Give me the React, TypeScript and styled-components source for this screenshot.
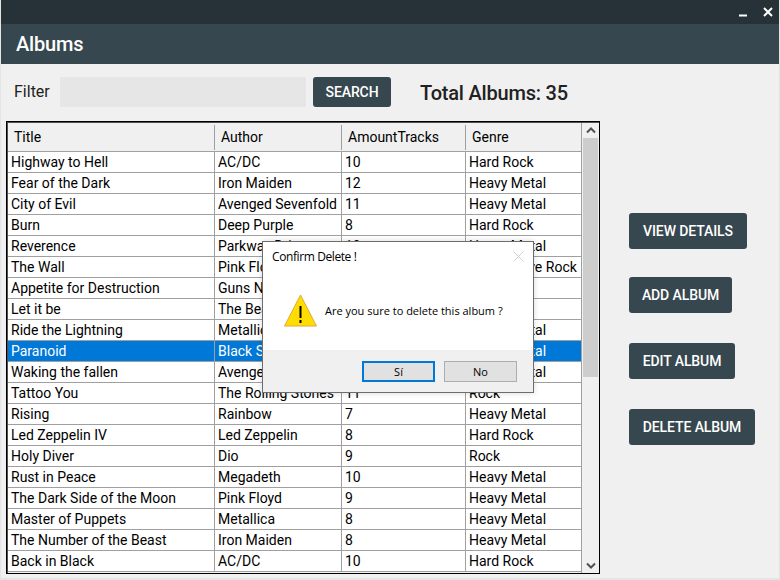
import React from "react";
import styled, { createGlobalStyle } from "styled-components";

const GlobalStyle = createGlobalStyle`
  html, body {
    margin: 0;
    padding: 0;
    background: #f0f0f0;
  }
  * {
    box-sizing: border-box;
  }
`;

const albums = [
  ["Highway to Hell", "AC/DC", "10", "Hard Rock"],
  ["Fear of the Dark", "Iron Maiden", "12", "Heavy Metal"],
  ["City of Evil", "Avenged Sevenfold", "11", "Heavy Metal"],
  ["Burn", "Deep Purple", "8", "Hard Rock"],
  ["Reverence", "Parkway Drive", "10", "Heavy Metal"],
  ["The Wall", "Pink Floyd", "26", "Progressive Rock"],
  ["Appetite for Destruction", "Guns N' Roses", "12", "Hard Rock"],
  ["Let it be", "The Beatles", "12", "Rock"],
  ["Ride the Lightning", "Metallica", "8", "Heavy Metal"],
  ["Paranoid", "Black Sabbath", "8", "Heavy Metal"],
  ["Waking the fallen", "Avenged Sevenfold", "13", "Heavy Metal"],
  ["Tattoo You", "The Rolling Stones", "11", "Rock"],
  ["Rising", "Rainbow", "7", "Heavy Metal"],
  ["Led Zeppelin IV", "Led Zeppelin", "8", "Hard Rock"],
  ["Holy Diver", "Dio", "9", "Rock"],
  ["Rust in Peace", "Megadeth", "10", "Heavy Metal"],
  ["The Dark Side of the Moon", "Pink Floyd", "9", "Heavy Metal"],
  ["Master of Puppets", "Metallica", "8", "Heavy Metal"],
  ["The Number of the Beast", "Iron Maiden", "8", "Heavy Metal"],
  ["Back in Black", "AC/DC", "10", "Hard Rock"],
];

const Window = styled.div`
  position: relative;
  width: 780px;
  height: 580px;
  overflow: hidden;
  font-family: Roboto, "Liberation Sans", sans-serif;
  background: #f0f0f0;
  border-left: 1px solid #e4e4e4;
  border-right: 1px solid #e4e4e4;
  border-bottom: 2px solid #e4e4e4;
`;

const TitleBar = styled.div`
  height: 24px;
  margin: 0 -1px;
  background: #263238;
  display: flex;
  justify-content: flex-end;
  align-items: center;
  gap: 15px;
  padding: 0 7px 0 0;
  color: #fff;
`;

const Header = styled.div`
  height: 40px;
  margin: 0 -1px;
  background: #37474f;
  color: #fff;
  font-size: 20px;
  font-weight: 500;
  letter-spacing: -0.2px;
  line-height: 40px;
  padding-left: 16px;
`;

const FilterRow = styled.div`
  display: flex;
  align-items: center;
  height: 57px;
  padding: 0 0 2px 13px;
`;

const FilterLabel = styled.label`
  font-size: 16px;
  color: #212121;
  width: 46px;
`;

const FilterInput = styled.div`
  width: 246px;
  height: 30px;
  background: #e6e6e6;
`;

const Button = styled.button<{ $top?: number; $width: number }>`
  width: ${({ $width }) => $width}px;
  height: 36px;
  padding: 0;
  margin-top: ${({ $top }) => $top ?? 30}px;
  border: 0;
  border-radius: 3px;
  background: #37474f;
  color: #fff;
  font-family: inherit;
  font-size: 14px;
  font-weight: 500;
  letter-spacing: -0.1px;
  white-space: nowrap;
`;

const SearchButton = styled(Button)`
  height: 30px;
  margin-top: 0;
  margin-left: 7px;
`;

const Total = styled.div`
  margin: 2px 0 0 29px;
  font-size: 20px;
  font-weight: 500;
  letter-spacing: -0.2px;
  color: #212121;
`;

const Body = styled.div`
  display: flex;
  align-items: flex-start;
`;

const TableFrame = styled.div`
  width: 594px;
  height: 453px;
  margin-left: 5px;
  padding: 1px 0 0 1px;
  border: 1px solid #000;
  display: flex;
  overflow: hidden;
  background: #505050;
`;

const Table = styled.div`
  width: 574px;
  overflow: hidden;
  font-size: 14px;
  color: #000;
  background: #f0f0f0;
  border-right: 1px solid #a0a0a0;
`;

const Columns = `
  display: grid;
  grid-template-columns: 207px 127px 124px 1fr;
`;

const HeaderRow = styled.div`
  ${Columns}
  height: 29px;
  padding-top: 2px;
  border-bottom: 1px solid #a0a0a0;
  background: #f0f0f0;
`;

const HeaderCell = styled.div`
  height: 25px;
  line-height: 25px;
  padding-left: 6px;
  border-right: 1px solid #a0a0a0;
  &:last-child {
    border-right: 0;
  }
`;

const Row = styled.div<{ $selected?: boolean }>`
  ${Columns}
  height: 21px;
  background: ${({ $selected }) => ($selected ? "#0078d7" : "#fff")};
  color: ${({ $selected }) => ($selected ? "#fff" : "#000")};
  border-bottom: 1px solid #a0a0a0;
`;

const Cell = styled.div`
  line-height: 20px;
  padding-left: 3px;
  white-space: nowrap;
  overflow: hidden;
  border-right: 1px solid #a0a0a0;
  &:last-child {
    border-right: 0;
  }
`;

const Scrollbar = styled.div`
  width: 17px;
  display: flex;
  flex-direction: column;
  align-items: stretch;
  background: #f0f0f0;
`;

const ScrollArrow = styled.div`
  height: 15px;
  display: flex;
  align-items: center;
  justify-content: center;
`;

const ScrollThumb = styled.div`
  height: 239px;
  margin: 0 1px;
  background: #cdcdcd;
`;

const ScrollTrack = styled.div`
  flex: 1;
`;

const Actions = styled.div`
  display: flex;
  flex-direction: column;
  align-items: flex-start;
  padding: 62px 0 0 29px;
`;

const Dialog = styled.div`
  position: absolute;
  left: 261px;
  top: 241px;
  width: 272px;
  height: 152px;
  background: #fff;
  border: 1px solid #6d6d6d;
  box-shadow: 0 0 6px rgba(0, 0, 0, 0.15);
  display: flex;
  flex-direction: column;
  font-family: "Open Sans", "Noto Sans", sans-serif;
  color: #000;
`;

const DialogTitle = styled.div`
  display: flex;
  justify-content: space-between;
  align-items: center;
  height: 28px;
  padding: 0 9px;
  font-size: 12px;
  letter-spacing: -0.4px;
`;

const DialogBody = styled.div`
  flex: 1;
  display: flex;
  align-items: center;
  gap: 8px;
  padding: 0 0 0 21px;
  font-size: 11px;
  white-space: nowrap;
`;

const DialogFooter = styled.div`
  height: 42px;
  background: #f0f0f0;
  display: flex;
  justify-content: flex-end;
  gap: 9px;
  padding: 11px 16px 0 0;
`;

const DialogButton = styled.button<{ $primary?: boolean }>`
  width: 73px;
  height: 21px;
  padding: 0;
  background: #e1e1e1;
  border: ${({ $primary }) =>
    $primary ? "2px solid #0078d7" : "1px solid #adadad"};
  font-family: inherit;
  font-size: 11px;
  color: #000;
`;

function App() {
  return (
    <Window>
      <GlobalStyle />
      <TitleBar>
        <svg width="10" height="10" viewBox="0 0 10 10">
          <path d="M1 8.5h8" stroke="#fff" strokeWidth="2" />
        </svg>
        <svg width="10" height="10" viewBox="0 0 10 10">
          <path d="M1 1l8 8M9 1l-8 8" stroke="#fff" strokeWidth="2" />
        </svg>
      </TitleBar>
      <Header>Albums</Header>
      <FilterRow>
        <FilterLabel>Filter</FilterLabel>
        <FilterInput />
        <SearchButton $width={78}>SEARCH</SearchButton>
        <Total>Total Albums: 35</Total>
      </FilterRow>
      <Body>
        <TableFrame>
          <Table>
            <HeaderRow>
              <HeaderCell>Title</HeaderCell>
              <HeaderCell>Author</HeaderCell>
              <HeaderCell>AmountTracks</HeaderCell>
              <HeaderCell>Genre</HeaderCell>
            </HeaderRow>
            {albums.map((album) => (
              <Row key={album[0]} $selected={album[0] === "Paranoid"}>
                {album.map((value, i) => (
                  <Cell key={i}>{value}</Cell>
                ))}
              </Row>
            ))}
          </Table>
          <Scrollbar>
            <ScrollArrow>
              <svg width="10" height="7" viewBox="0 0 10 7">
                <path d="M1 5.5l4-4 4 4" fill="none" stroke="#505050" strokeWidth="2" />
              </svg>
            </ScrollArrow>
            <ScrollThumb />
            <ScrollTrack />
            <ScrollArrow>
              <svg width="10" height="7" viewBox="0 0 10 7">
                <path d="M1 1.5l4 4 4-4" fill="none" stroke="#505050" strokeWidth="2" />
              </svg>
            </ScrollArrow>
          </Scrollbar>
        </TableFrame>
        <Actions>
          <Button $top={30} $width={118}>VIEW DETAILS</Button>
          <Button $top={28} $width={103}>ADD ALBUM</Button>
          <Button $width={106}>EDIT ALBUM</Button>
          <Button $width={126}>DELETE ALBUM</Button>
        </Actions>
      </Body>
      <Dialog>
        <DialogTitle>
          <span>Confirm Delete !</span>
          <svg width="11" height="11" viewBox="0 0 11 11">
            <path d="M.5.5l10 10M10.5.5l-10 10" stroke="#d0d0d0" />
          </svg>
        </DialogTitle>
        <DialogBody>
          <svg width="33" height="33" viewBox="0 0 33 33">
            <path d="M16.5 1L32.5 32H.5z" fill="#ffdd00" stroke="#e0a83a" strokeLinejoin="round" />
            <path d="M16.5 12v12" stroke="#000" strokeWidth="2" />
            <path d="M16.5 26v3" stroke="#000" strokeWidth="2" />
          </svg>
          <span>Are you sure to delete this album ?</span>
        </DialogBody>
        <DialogFooter>
          <DialogButton $primary>Sí</DialogButton>
          <DialogButton>No</DialogButton>
        </DialogFooter>
      </Dialog>
    </Window>
  );
}

export default App;
